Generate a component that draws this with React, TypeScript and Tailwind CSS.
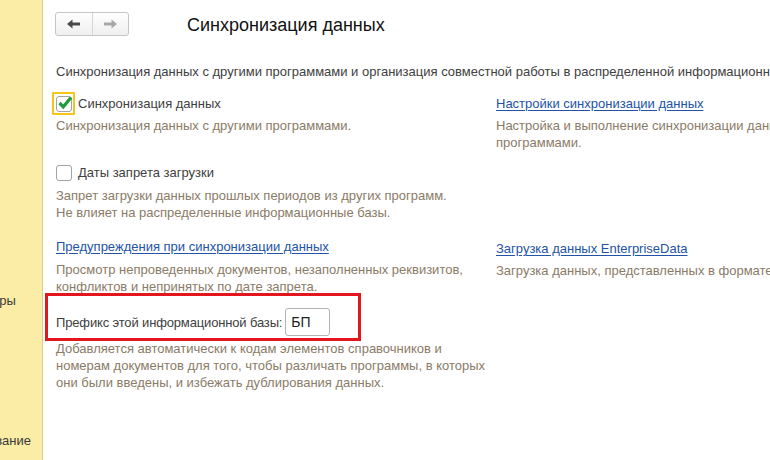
import React from "react";

const sidebarItems = [
  "Главное",
  "Руководителю",
  "Банк и касса",
  "Продажи",
  "Покупки",
  "Склад",
  "Производство",
  "ОС и НМА",
  "Зарплата и кадры",
  "Операции",
  "Отчеты",
  "Справочники",
  "Администрирование",
];

function Arrow({ dir, color }: { dir: "left" | "right"; color: string }) {
  return (
    <svg width="13" height="10" viewBox="0 0 13 10" className={dir === "right" ? "rotate-180" : ""}>
      <path d="M0 5 L5.5 0.5 L5.5 9.5 Z" fill={color} />
      <rect x="5" y="3.5" width="8" height="3" fill={color} />
    </svg>
  );
}

function Checkbox({ checked, focused }: { checked?: boolean; focused?: boolean }) {
  return (
    <span
      className={`flex h-[23px] w-[23px] items-center justify-center rounded-[1px] border-2 ${
        focused ? "border-[#f5c518]" : "border-transparent"
      }`}
    >
      <span className="relative flex h-[16px] w-[16px] items-center justify-center rounded-[3px] border border-[#a3a3a3] bg-white">
        {checked && (
          <svg width="16" height="15" viewBox="0 0 16 15" className="absolute -top-[2px] left-[0px]">
            <path d="M2.5 8 L6.3 11.8 L14 2.5" fill="none" stroke="#1e9b3c" strokeWidth="3.2" strokeLinejoin="miter" />
          </svg>
        )}
      </span>
    </span>
  );
}

function Link({ children }: { children: React.ReactNode }) {
  return <span className="text-[#2253a6] underline decoration-[#2253a6] underline-offset-[2px]">{children}</span>;
}

export default function App() {
  return (
    <div className="flex h-[460px] w-[770px] overflow-hidden bg-white font-['Liberation_Sans',Arial,sans-serif] text-[13px] leading-[17px] text-[#404040]">
      <aside className="h-full w-[43px] shrink-0 overflow-hidden border-r border-[#ddcd88] bg-[#fbeca6]">
        <div className="ml-[-93px] mt-[12px] flex flex-col gap-[18px] whitespace-nowrap text-[#3a3a3a]">
          {sidebarItems.map((item) => (
            <div key={item}>{item}</div>
          ))}
        </div>
      </aside>

      <main className="relative flex-1 overflow-hidden pl-[13px]">
        <div className="mt-[12px] flex h-[24px] items-start">
          <div className="-ml-[1px] flex h-[24px] w-[74px] rounded-[3px] border border-[#c6c6c6] bg-gradient-to-b from-white to-[#efefef]">
            <div className="flex flex-1 items-center justify-center border-r border-[#d6d6d6]">
              <Arrow dir="left" color="#4a4a4a" />
            </div>
            <div className="flex flex-1 items-center justify-center">
              <Arrow dir="right" color="#a8a8a8" />
            </div>
          </div>
          <h1 className="ml-[58px] mt-[2px] text-[18px] leading-[22px] text-[#111]">Синхронизация данных</h1>
        </div>

        <p className="mt-[27px] whitespace-nowrap">
          Синхронизация данных с другими программами и организация совместной работы в распределенной информационной базе.
        </p>

        <div className="flex">
          <div className="w-[440px] shrink-0">
            <div className="-ml-[4px] mt-[12px] flex items-center">
              <Checkbox checked focused />
              <span className="ml-[3px]">Синхронизация данных</span>
            </div>
            <p className="mt-[2px] text-[#8a7b67]">Синхронизация данных с другими программами.</p>

            <div className="-ml-[4px] mt-[27px] flex items-center">
              <Checkbox />
              <span className="ml-[3px]">Даты запрета загрузки</span>
            </div>
            <p className="mt-[3px] text-[#8a7b67]">
              Запрет загрузки данных прошлых периодов из других программ.
              <br />
              Не влияет на распределенные информационные базы.
            </p>

            <p className="mt-[17px]">
              <Link>Предупреждения при синхронизации данных</Link>
            </p>
            <p className="mt-[6px] text-[#8a7b67]">
              Просмотр непроведенных документов, незаполненных реквизитов,
              <br />
              конфликтов и непринятых по дате запрета.
            </p>

            <div className="mt-[13px] flex h-[28px] items-center">
              <span className="tracking-[-0.15px]">Префикс этой информационной базы:</span>
              <span className="ml-[3px] flex h-[28px] w-[45px] items-center rounded-[3px] border border-[#b3b3b3] bg-white pl-[5px] text-[14px] text-[#222]">
                БП
              </span>
            </div>
            <p className="mt-[4px] text-[#8a7b67]">
              Добавляется автоматически к кодам элементов справочников и
              <br />
              номерам документов для того, чтобы различать программы, в которых
              <br />
              они были введены, и избежать дублирования данных.
            </p>
          </div>

          <div className="w-[360px] shrink-0">
            <p className="mt-[15px]">
              <Link>Настройки синхронизации данных</Link>
            </p>
            <p className="mt-[5px] text-[#8a7b67]">
              Настройка и выполнение синхронизации данных с другими
              <br />
              программами.
            </p>
            <p className="mt-[89px]">
              <Link>Загрузка данных EnterpriseData</Link>
            </p>
            <p className="mt-[5px] whitespace-nowrap text-[#8a7b67]">
              Загрузка данных, представленных в формате EnterpriseData.
            </p>
          </div>
        </div>

        <div className="pointer-events-none absolute left-[2px] top-[293px] h-[48px] w-[316px] border-[3px] border-[#e3151d]" />
      </main>
    </div>
  );
}
